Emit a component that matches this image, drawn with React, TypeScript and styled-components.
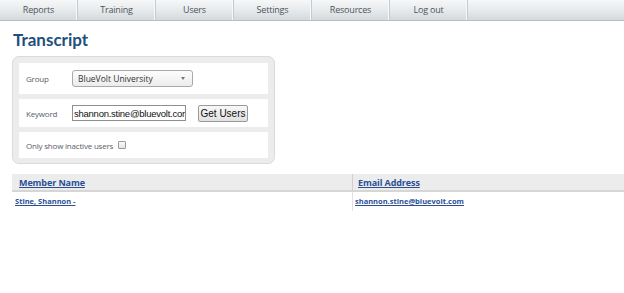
import React from "react";
import styled, { createGlobalStyle } from "styled-components";

const GlobalStyle = createGlobalStyle`
  body {
    margin: 0;
    background: #ffffff;
    font-family: "Open Sans", "Noto Sans", Arial, sans-serif;
  }
`;

const NAV_ITEMS = ["Reports", "Training", "Users", "Settings", "Resources", "Log out"];

const NavBar = styled.nav`
  display: flex;
  height: 20px;
  background: linear-gradient(#f6f7f8, #e6e9eb 55%, #d5d9dc);
  border-bottom: 1px solid #b9bec2;
`;
const NavItem = styled.a`
  width: 77px;
  flex: none;
  text-align: center;
  font-size: 9px;
  letter-spacing: -0.2px;
  line-height: 20px;
  color: #4d545b;
  border-right: 1px solid #c6cbcf;
  box-shadow: inset -1px 0 0 #f7f8f9;
  text-decoration: none;
`;

const Main = styled.main`
  padding-left: 12px;
`;
const Title = styled.h1`
  margin: 8px 0 0 1px;
  font-family: Lato, "Open Sans", sans-serif;
  font-size: 17px;
  font-weight: 700;
  line-height: 22px;
  color: #1e4f7d;
`;

const FilterPanel = styled.div`
  box-sizing: border-box;
  width: 263px;
  margin-top: 5px;
  padding: 6px 6px 5px;
  display: flex;
  flex-direction: column;
  gap: 5px;
  background: #ececec;
  border: 1px solid #dadada;
  border-radius: 7px;
`;
const FilterRow = styled.div<{ $h: number }>`
  display: flex;
  align-items: center;
  height: ${(p) => p.$h}px;
  padding-left: 7px;
  background: #ffffff;
  font-size: 8px;
  letter-spacing: -0.2px;
  color: #56606a;
`;
const Label = styled.span`
  width: 46px;
  flex: none;
`;
const SelectBox = styled.div`
  box-sizing: border-box;
  width: 121px;
  height: 17px;
  display: flex;
  align-items: center;
  justify-content: space-between;
  padding: 0 7px 0 5px;
  border: 1px solid #a9a9a9;
  border-radius: 3px;
  background: linear-gradient(#fdfdfd, #ececec);
  font-size: 8.5px;
  letter-spacing: 0;
  color: #333;
`;
const Caret = styled.span`
  width: 0;
  height: 0;
  border-left: 2.5px solid transparent;
  border-right: 2.5px solid transparent;
  border-top: 3.5px solid #777;
`;
const KeywordInput = styled.input`
  box-sizing: border-box;
  width: 114px;
  height: 16px;
  padding: 0 0 0 1px;
  border: 1px solid #8f8f8f;
  font-family: "Liberation Sans", Arial, sans-serif;
  font-size: 9.5px;
  letter-spacing: -0.25px;
  color: #111;
  outline: none;
`;
const Button = styled.button`
  box-sizing: border-box;
  margin-left: 12px;
  width: 50px;
  height: 17px;
  padding: 0;
  border: 1px solid #9a9a9a;
  border-radius: 2px;
  background: linear-gradient(#f8f8f8, #e1e1e1);
  font-family: "Liberation Sans", Arial, sans-serif;
  font-size: 10px;
  color: #111;
`;
const CheckBox = styled.span`
  box-sizing: border-box;
  display: inline-block;
  width: 8px;
  height: 8px;
  margin-left: 5px;
  border: 1px solid #9a9a9a;
  border-radius: 1px;
  background: linear-gradient(#fafafa, #e4e4e4);
`;

const Table = styled.div`
  margin-top: 10px;
  display: grid;
  grid-template-columns: 340px 1fr;
`;
const HeadCell = styled.div<{ $divider?: boolean }>`
  height: 15px;
  padding: 1px 0 0 ${(p) => (p.$divider ? 5 : 7)}px;
  background: #ececec;
  border-bottom: 2px solid #d6d6d6;
  border-left: ${(p) => (p.$divider ? "1px solid #cfcfcf" : "none")};
  font-size: 9px;
  letter-spacing: -0.1px;
  line-height: 15px;
`;
const Cell = styled.div<{ $divider?: boolean }>`
  height: 17px;
  padding: 2px 0 0 ${(p) => (p.$divider ? 2 : 3)}px;
  border-left: ${(p) => (p.$divider ? "1px solid #e2e2e2" : "none")};
  font-size: 7.5px;
  line-height: 14px;
`;
const Link = styled.a`
  font-weight: 700;
  color: #2b4f95;
  text-decoration: underline;
`;

export default function App() {
  return (
    <>
      <GlobalStyle />
      <NavBar>
        {NAV_ITEMS.map((item) => (
          <NavItem key={item}>{item}</NavItem>
        ))}
      </NavBar>
      <Main>
        <Title>Transcript</Title>
        <FilterPanel>
          <FilterRow $h={31}>
            <Label>Group</Label>
            <SelectBox>
              BlueVolt University
              <Caret />
            </SelectBox>
          </FilterRow>
          <FilterRow $h={28}>
            <Label>Keyword</Label>
            <KeywordInput defaultValue="shannon.stine@bluevolt.com" />
            <Button>Get Users</Button>
          </FilterRow>
          <FilterRow $h={26}>
            Only show inactive users
            <CheckBox />
          </FilterRow>
        </FilterPanel>
        <Table>
          <HeadCell>
            <Link>Member Name</Link>
          </HeadCell>
          <HeadCell $divider>
            <Link>Email Address</Link>
          </HeadCell>
          <Cell>
            <Link>Stine, Shannon -</Link>
          </Cell>
          <Cell $divider>
            <Link>shannon.stine@bluevolt.com</Link>
          </Cell>
        </Table>
      </Main>
    </>
  );
}
